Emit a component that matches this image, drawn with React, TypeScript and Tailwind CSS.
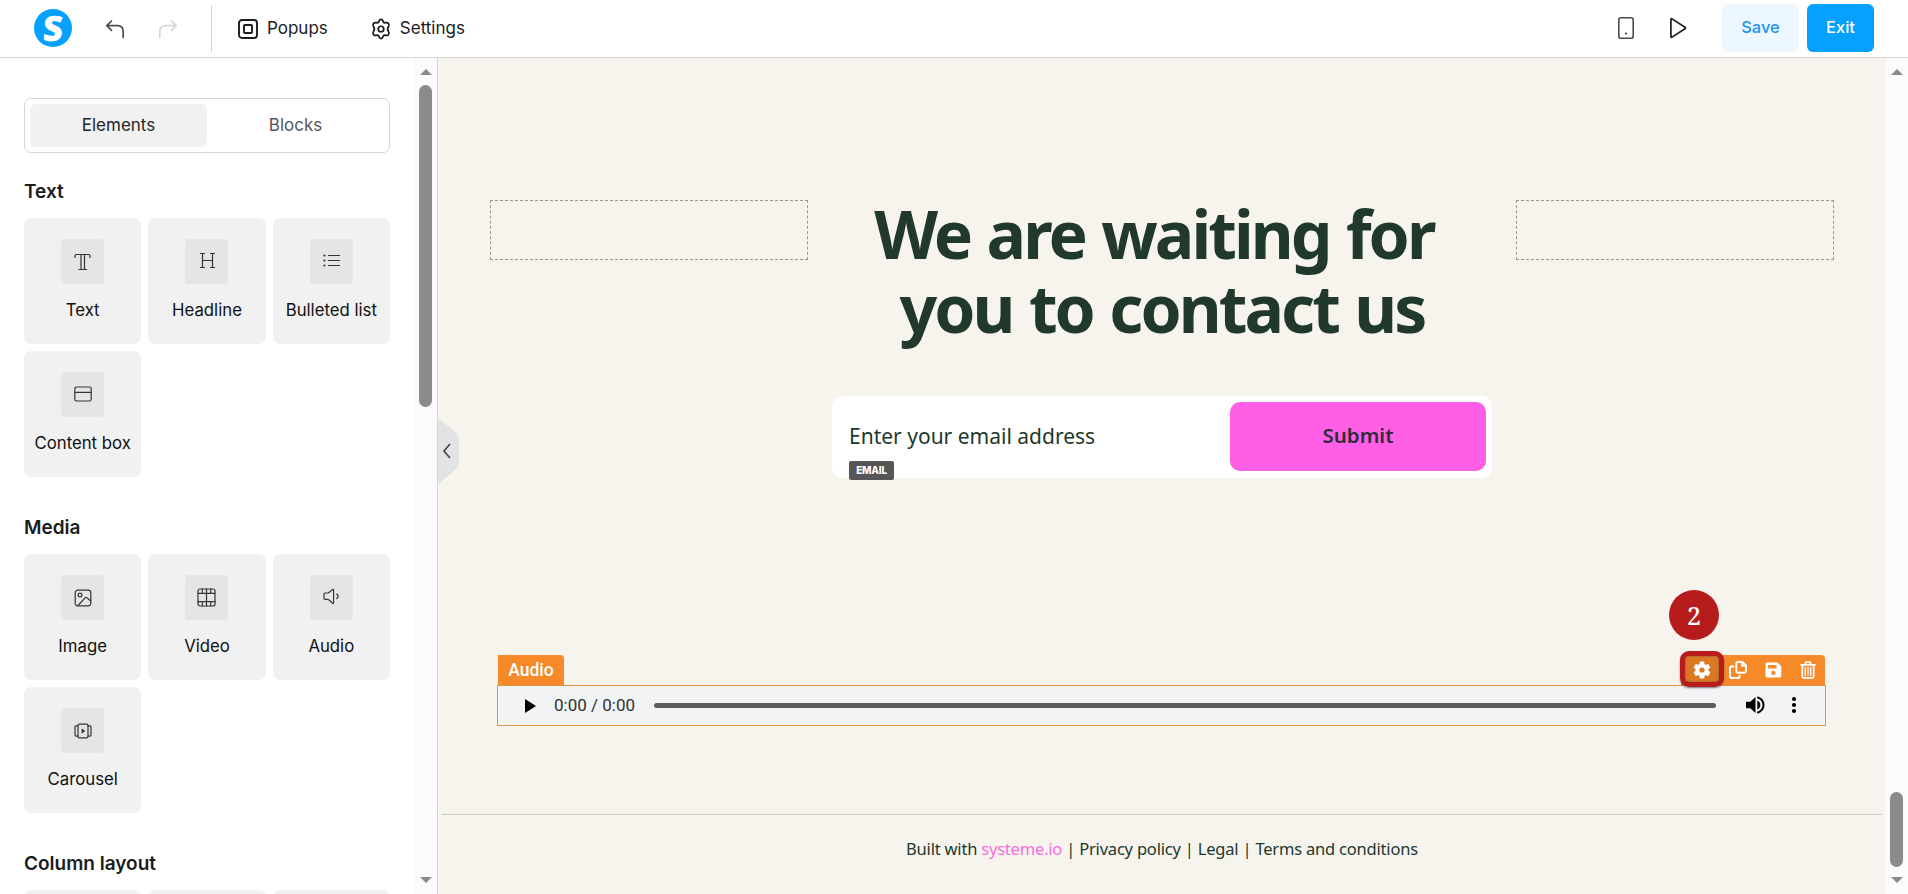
import type { ReactNode } from "react";

const stroke = {
  fill: "none",
  stroke: "currentColor",
  strokeLinecap: "round",
  strokeLinejoin: "round",
} as const;

function TextIcon() {
  return (
    <svg width="17" height="18" viewBox="0 0 17 18" strokeWidth="1.2" {...stroke}>
      <path d="M1 4.5V3Q1 1.5 2.5 1.5H14.5Q16 1.5 16 3V4.5M7 1.5V16.5M10.5 1.5V16.5M5 16.5H12.5" />
    </svg>
  );
}

function HeadlineIcon() {
  return (
    <svg className="mb-[2px] ml-px" width="17" height="17" viewBox="0 0 17 17" strokeWidth="1.2" {...stroke}>
      <path d="M1.5 1.5H5.5M11.5 1.5H15.5M1.5 15.5H5.5M11.5 15.5H15.5M3.5 1.5V15.5M13.5 1.5V15.5M3.5 8.5H13.5" />
    </svg>
  );
}

function ListIcon() {
  return (
    <svg className="mb-[2px] ml-px" width="17" height="15" viewBox="0 0 17 15" strokeWidth="1.2" {...stroke}>
      <path d="M5.5 2.5H16.5M5.5 7.5H16.5M5.5 12.5H16.5" />
      <path d="M1.3 2.5H1.5M1.3 7.5H1.5M1.3 12.5H1.5" strokeWidth="2" />
    </svg>
  );
}

function BoxIcon() {
  return (
    <svg className="mb-[2px]" width="18" height="16" viewBox="0 0 18 16" strokeWidth="1.2" {...stroke}>
      <rect x="0.8" y="1" width="16.4" height="14" rx="1.8" />
      <path d="M1 6.3H17" />
    </svg>
  );
}

function ImageIcon() {
  return (
    <svg width="18" height="18" viewBox="0 0 18 18" strokeWidth="1.2" {...stroke}>
      <rect x="1.2" y="1.2" width="15.6" height="15.6" rx="2.5" />
      <circle cx="6" cy="6" r="1.9" />
      <path d="M4 16.5L11.3 8.6Q12 8 12.7 8.6L16.7 12" />
    </svg>
  );
}

function VideoIcon() {
  return (
    <svg width="19" height="19" viewBox="0 0 19 19" strokeWidth="1.2" {...stroke}>
      <rect x="1" y="1" width="17" height="17" rx="2" />
      <path d="M1 5.3H18M1 13.7H18M9.5 1V18M5.3 1.2V5M13.7 1.2V5M5.3 14V18M13.7 14V18" />
    </svg>
  );
}

function AudioIcon() {
  return (
    <svg className="mb-[2px]" width="17" height="17" viewBox="0 0 17 17" strokeWidth="1.2" {...stroke}>
      <path d="M1 6Q1 5 2 5H4.5Q5.5 5 6.3 4.3L9.3 1.6Q10.6 .7 10.6 2.2V14.4Q10.6 16 9.3 15L6.3 12.2Q5.5 11.4 4.5 11.4H2Q1 11.4 1 10.4Z" />
      <path d="M13.7 6Q16.7 8.2 13.7 10.5" />
    </svg>
  );
}

function CarouselIcon() {
  return (
    <svg width="18" height="16" viewBox="0 0 18 16" strokeWidth="1.2" {...stroke}>
      <rect x="4" y="1.2" width="10" height="13.6" rx="1.2" />
      <path d="M4 2.8H2Q1 2.8 1 4V12Q1 13.2 2 13.2H4M14 2.8H16Q17 2.8 17 4V12Q17 13.2 16 13.2H14" />
      <path d="M8.2 6.4V9.6L10.3 8Z" fill="currentColor" />
    </svg>
  );
}

const SECTIONS: { title: string; items: { label: string; icon: ReactNode }[] }[] = [
  {
    title: "Text",
    items: [
      { label: "Text", icon: <TextIcon /> },
      { label: "Headline", icon: <HeadlineIcon /> },
      { label: "Bulleted list", icon: <ListIcon /> },
      { label: "Content box", icon: <BoxIcon /> },
    ],
  },
  {
    title: "Media",
    items: [
      { label: "Image", icon: <ImageIcon /> },
      { label: "Video", icon: <VideoIcon /> },
      { label: "Audio", icon: <AudioIcon /> },
      { label: "Carousel", icon: <CarouselIcon /> },
    ],
  },
];

function Header() {
  return (
    <header className="flex h-[58px] shrink-0 items-start border-b border-[#d3d5d3] bg-white pl-[34px] text-[#1b1c1d]">
      <div className="mt-[9px] flex size-[38px] items-center justify-center rounded-full bg-[#06a0ff]">
        <span className="-skew-x-3 font-['Open_Sans',sans-serif] text-[35px] leading-[38px] font-extrabold text-white">
          S
        </span>
      </div>
      <svg className="mt-[19px] ml-[33px] text-[#4c4d4f]" width="20" height="20" viewBox="0 0 20 20" strokeWidth="1.7" {...stroke}>
        <path d="M6.5 2L1.8 6.7L6.5 11.4M1.8 6.7H12.5Q18.2 6.7 18.2 12.4V18.5" />
      </svg>
      <svg className="mt-[19px] ml-[33px] text-[#d6d7d8]" width="20" height="20" viewBox="0 0 20 20" strokeWidth="1.7" {...stroke}>
        <path d="M13.5 2L18.2 6.7L13.5 11.4M18.2 6.7H7.5Q1.8 6.7 1.8 12.4V18.5" />
      </svg>
      <div className="mt-[5px] ml-[33px] h-[47px] w-px bg-[#d3d5d6]" />
      <div className="mt-[18px] ml-[26px] flex h-[22px] items-center">
        <svg width="20" height="20" viewBox="0 0 20 20" strokeWidth="1.9" {...stroke}>
          <rect x="1" y="1" width="18" height="18" rx="3" />
          <rect x="6" y="6" width="8" height="8" rx="0.8" />
        </svg>
        <span className="ml-[9px] pb-[2px] text-[17px] leading-5">Popups</span>
      </div>
      <div className="mt-[18px] ml-[42px] flex h-[22px] items-center">
        <svg width="22" height="22" viewBox="0 0 24 24" strokeWidth="1.9" {...stroke}>
          <path d="M9.9 3.4Q10.4 1.5 12 1.5T14.1 3.4Q14.8 5.6 17 5.1Q19 4.6 20.1 5.9Q21.4 7.7 20.2 9.2Q18.2 12 20.2 14.8Q21.4 16.3 20.1 18.1Q19 19.4 17 18.9Q14.8 18.4 14.1 20.6Q13.6 22.5 12 22.5T9.9 20.6Q9.2 18.4 7 18.9Q5 19.4 3.9 18.1Q2.6 16.3 3.8 14.8Q5.8 12 3.8 9.2Q2.6 7.7 3.9 5.9Q5 4.6 7 5.1Q9.2 5.6 9.9 3.4Z" />
          <circle cx="12" cy="12" r="3" />
        </svg>
        <span className="ml-[8px] pb-[2px] text-[17px] leading-5">Settings</span>
      </div>
      <div className="mt-1 mr-[34px] ml-auto flex h-12 items-center">
        <svg className="text-[#4a4b4d]" width="16" height="22" viewBox="0 0 16 22" strokeWidth="1.6" {...stroke}>
          <rect x="0.8" y="0.8" width="14.4" height="20.4" rx="2" />
          <path d="M7.9 16.5H8.1" strokeWidth="2.2" />
        </svg>
        <svg className="ml-[35px]" width="18" height="22" viewBox="0 0 18 22" strokeWidth="1.7" {...stroke}>
          <path d="M1.9 2.4Q1.9 1.2 3 1.9L16 10.2Q17 11 16 11.8L3 20.1Q1.9 20.8 1.9 19.6Z" />
        </svg>
        <button className="ml-[35px] h-12 w-[77px] rounded-md bg-[#edf7ff] pb-[2px] text-[16.5px] font-medium text-[#2196ec]">
          Save
        </button>
        <button className="ml-2 h-12 w-[67px] rounded-md bg-[#06a0ff] pb-[2px] text-[16.5px] font-medium text-white">
          Exit
        </button>
      </div>
    </header>
  );
}

function Arrow({ down }: { down?: boolean }) {
  return (
    <svg className="block text-[#8a8a8a]" width="12" height="6" viewBox="0 0 12 6">
      <path d={down ? "M0 0H12L6 6Z" : "M0 6H12L6 0Z"} fill="currentColor" />
    </svg>
  );
}

function ElementCard({ label, icon }: { label: string; icon: ReactNode }) {
  return (
    <div className="flex h-[126px] flex-col items-center rounded-[7px] bg-[#f1f1f1] pt-[21px]">
      <div className="flex h-[45px] w-[43px] items-center justify-center rounded bg-[#e5e5e5] text-[#333436]">
        {icon}
      </div>
      <span className="mt-4 text-[16.75px] leading-5 whitespace-nowrap text-[#0f1011]">{label}</span>
    </div>
  );
}

function SectionTitle({ children }: { children: ReactNode }) {
  return (
    <h3 className="h-[39px] pt-px text-[19px] leading-6 font-semibold text-[#1b1c1d]">{children}</h3>
  );
}

function Sidebar() {
  return (
    <aside className="flex w-[438px] shrink-0 border-r border-[#d3d5d6] bg-white">
      <div className="h-full w-[414px] overflow-hidden pt-10 pr-6 pl-6">
        <div className="flex h-[55px] rounded-[7px] border border-[#d5d6d7] p-[5px] text-[17px]">
          <div className="flex w-[177px] items-center justify-center rounded-md bg-[#f1f1f1] text-[#242526]">
            Elements
          </div>
          <div className="flex flex-1 items-center justify-center text-[#55585b]">Blocks</div>
        </div>
        {SECTIONS.map((section) => (
          <section key={section.title} className="mb-3 pt-[26px]">
            <SectionTitle>{section.title}</SectionTitle>
            <div className="grid grid-cols-3 gap-[7px]">
              {section.items.map((item) => (
                <ElementCard key={item.label} {...item} />
              ))}
            </div>
          </section>
        ))}
        <section className="pt-[26px]">
          <SectionTitle>Column layout</SectionTitle>
          <div className="grid grid-cols-3 gap-[7px]">
            <div className="h-[126px] rounded-[7px] bg-[#f1f1f1]" />
            <div className="h-[126px] rounded-[7px] bg-[#f1f1f1]" />
            <div className="h-[126px] rounded-[7px] bg-[#f1f1f1]" />
          </div>
        </section>
      </div>
      <div className="flex w-[23px] flex-col items-center bg-[#fbfbfb] pt-[11px] pb-[11px]">
        <Arrow />
        <div className="mt-[10px] h-[322px] w-[13px] rounded-full bg-[#8b8b8b]" />
        <div className="flex-1" />
        <Arrow down />
      </div>
    </aside>
  );
}

function AudioWidget() {
  return (
    <div className="relative mx-[59px] mt-[177px]">
      <div className="flex h-[30px] items-stretch justify-between px-px">
        <div className="flex w-[66px] items-center justify-center rounded-tr bg-[#f68a28] font-[Roboto,sans-serif] text-[17.5px] font-medium text-white">
          Audio
        </div>
        <div className="flex w-[144px] items-center rounded-tr bg-[#f68a28] text-white">
          <div className="flex h-full w-[41px] items-center justify-center bg-[#dc7824]">
            <svg width="18" height="18" viewBox="0 0 18 18">
              <g fill="currentColor">
                <circle cx="9" cy="9" r="6.4" />
                <rect x="6.6" y="0.5" width="4.8" height="17" rx="1.2" />
                <rect x="6.6" y="0.5" width="4.8" height="17" rx="1.2" transform="rotate(60 9 9)" />
                <rect x="6.6" y="0.5" width="4.8" height="17" rx="1.2" transform="rotate(120 9 9)" />
              </g>
              <circle cx="9" cy="9" r="2.6" fill="#dc7824" />
            </svg>
          </div>
          <svg className="ml-[7px]" width="18" height="18" viewBox="0 0 18 18" strokeWidth="1.9" {...stroke}>
            <path d="M8.7 1H13.5L17 4.5V10.3Q17 11.7 15.6 11.7H8.7Q7.3 11.7 7.3 10.3V2.4Q7.3 1 8.7 1ZM13.2 1.3V4.8H16.7" />
            <path d="M4.4 5.5H2.4Q1 5.5 1 6.9V15.6Q1 17 2.4 17H9.3Q10.7 17 10.7 15.6V14.6" />
          </svg>
          <svg className="ml-[18px]" width="17" height="16" viewBox="0 0 17 16">
            <path fill="currentColor" fillRule="evenodd" d="M2 0.5H12.5L16.3 4.2V14Q16.3 15.5 14.8 15.5H2Q.5 15.5 .5 14V2Q.5 .5 2 .5ZM3 3V6.5H11.5V3ZM8.4 8.7A2.2 2.2 0 1 0 8.4 13.1A2.2 2.2 0 1 0 8.4 8.7Z" />
          </svg>
          <svg className="ml-[18px]" width="16" height="18" viewBox="0 0 16 18" strokeWidth="1.8" {...stroke}>
            <path d="M1 3.8H15M5 3.5L6 1.2H10L11 3.5M2.3 4V15Q2.3 16.8 4.1 16.8H11.9Q13.7 16.8 13.7 15V4" />
            <path d="M5.3 6.5V14.3M8 6.5V14.3M10.7 6.5V14.3" strokeWidth="1.4" />
          </svg>
        </div>
      </div>
      <div className="flex h-[41px] items-center border border-[#dd9447] bg-[#f1f3f4] text-black">
        <svg className="ml-[27px]" width="11" height="14" viewBox="0 0 11 14">
          <path d="M0 0V14L11 7Z" fill="currentColor" />
        </svg>
        <span className="mb-px ml-[18px] w-[82px] font-[Roboto,sans-serif] text-[17px] leading-5 whitespace-nowrap text-[#2f3031]">
          0:00 / 0:00
        </span>
        <div className="ml-[18px] h-[5px] w-[1062px] rounded-full bg-[#5c5c5d]" />
        <svg className="mb-px ml-[30px]" width="19" height="18" viewBox="0 0 19 18">
          <path d="M0 5.7V12.3H4.3L9.5 17V1L4.3 5.7Z" fill="currentColor" />
          <path d="M11.3 4.5Q14.3 6 14.3 9T11.3 13.5Z" fill="currentColor" />
          <path d="M11.3 1.2Q17.5 3.2 17.5 9T11.3 16.8" fill="none" stroke="currentColor" strokeWidth="2" />
        </svg>
        <svg className="mb-px ml-[26px]" width="6" height="18" viewBox="0 0 6 18" fill="currentColor">
          <circle cx="3" cy="3" r="2.1" />
          <circle cx="3" cy="9" r="2.1" />
          <circle cx="3" cy="15" r="2.1" />
        </svg>
      </div>
      {/* step marker over the settings button */}
      <div className="absolute -top-1 right-[102px] h-9 w-[44px] rounded-[9px] border-[5px] border-[#b61c1c] shadow-[0_1px_2px_rgba(60,60,90,0.7),inset_0_0_2px_rgba(60,60,90,0.7)]" />
      <div className="absolute -top-[65px] right-[107px] flex size-[50px] items-center justify-center rounded-full bg-[#b61c1c] font-['Noto_Serif','DejaVu_Serif',serif] text-[25px] leading-none font-medium text-white">
        2
      </div>
    </div>
  );
}

function Canvas() {
  return (
    <main className="relative flex min-w-0 flex-1 bg-[#f7f4ee] font-['Noto_Sans',sans-serif] text-[#20392c]">
      <div className="flex min-w-0 flex-1 flex-col">
        <div className="mt-[142px] flex items-start gap-6 pr-[51px] pl-[52px]">
          <div className="h-[60px] flex-1 border border-dashed border-[#979893]" />
          <div className="-mt-1 w-[660px]">
            <h1 className="text-center text-[66px] leading-[74px] font-bold tracking-[-2.9px] [word-spacing:2px] whitespace-pre">
              {"We are waiting for \nyou to contact us"}
            </h1>
            <div className="relative mt-[52px] flex h-[82px] items-start rounded-[10px] bg-white pt-[6px] pr-[6px] pl-[17px]">
              <span className="mt-5 text-[21px] leading-7 whitespace-nowrap">Enter your email address</span>
              <button className="ml-auto h-[69px] w-[256px] rounded-[10px] bg-[#ff5fe5] pb-[3px] text-[20.5px] font-semibold text-[#2f2c3c]">
                Submit
              </button>
              <span className="absolute top-[65px] left-[17px] flex h-[19px] w-[45px] items-center justify-center rounded-[2px] bg-[#565656] pb-px font-[Inter,sans-serif] text-[10px] font-extrabold tracking-[-0.2px] text-white">
                EMAIL
              </span>
            </div>
          </div>
          <div className="h-[60px] flex-1 border border-dashed border-[#979893]" />
        </div>
        <AudioWidget />
        <footer className="mt-[88px] mr-[3px] ml-1 border-t border-[#cbcbc7] pt-[22px] text-center text-[16.5px] leading-6 tracking-[-0.2px] whitespace-nowrap">
          Built with <span className="text-[#f56fe0]">systeme.io</span> | Privacy policy | Legal | Terms and conditions
        </footer>
      </div>
      <div className="flex w-[23px] flex-col items-center bg-[#fbfbfb] pt-[11px] pb-[11px]">
        <Arrow />
        <div className="flex-1" />
        <div className="mb-[10px] h-[75px] w-[13px] rounded-full bg-[#8b8b8b]" />
        <Arrow down />
      </div>
      <svg className="absolute top-[360px] left-0" width="22" height="66" viewBox="0 0 22 66">
        <path d="M0 0L16 13Q21 17 21 22V44Q21 49 16 53L0 66Z" fill="#e1e3e5" />
        <path d="M12 26L6 33L12 40" fill="none" stroke="#444648" strokeWidth="1.7" />
      </svg>
    </main>
  );
}

export default function App() {
  return (
    <div className="flex h-[894px] w-[1908px] flex-col overflow-hidden font-[Inter,sans-serif]">
      <Header />
      <div className="flex min-h-0 flex-1">
        <Sidebar />
        <Canvas />
      </div>
    </div>
  );
}
